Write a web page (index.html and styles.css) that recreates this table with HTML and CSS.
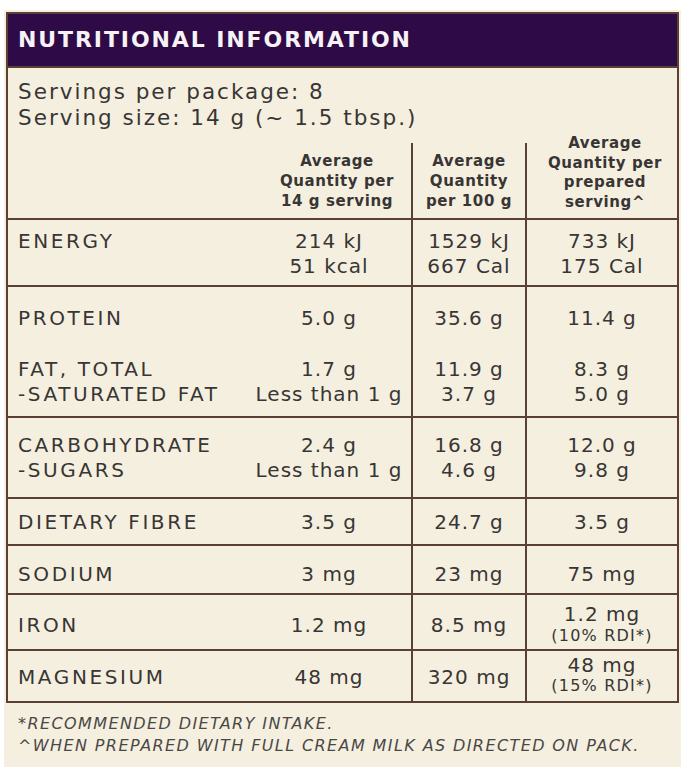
FILE: index.html
```html
<!DOCTYPE html>
<html lang="en">
<head>
<meta charset="utf-8">
<title>Nutritional Information</title>
<link rel="stylesheet" href="styles.css">
</head>
<body>
<div class="panel">
  <div class="label">
    <h1 class="title">NUTRITIONAL INFORMATION</h1>
    <div class="serving">
      <div>Servings per package: 8</div>
      <div>Serving size: 14 g (~ 1.5 tbsp.)</div>
    </div>
    <div class="row head">
      <div class="cell name"></div>
      <div class="cell c1"><div class="hd">Average<br>Quantity per<br>14 g serving</div></div>
      <div class="cell c2"><div class="hd">Average<br>Quantity<br>per 100 g</div></div>
      <div class="cell c3"><div class="hd hd4">Average<br>Quantity per<br>prepared<br>serving^</div></div>
    </div>
    <div class="row r-energy">
      <div class="cell name">ENERGY<br>&nbsp;</div>
      <div class="cell c1">214 kJ<br>51 kcal</div>
      <div class="cell c2">1529 kJ<br>667 Cal</div>
      <div class="cell c3">733 kJ<br>175 Cal</div>
    </div>
    <div class="row r-protein">
      <div class="cell name">PROTEIN</div>
      <div class="cell c1">5.0 g</div>
      <div class="cell c2">35.6 g</div>
      <div class="cell c3">11.4 g</div>
    </div>
    <div class="row r-fat nob">
      <div class="cell name">FAT, TOTAL<br>-SATURATED FAT</div>
      <div class="cell c1">1.7 g<br>Less than 1 g</div>
      <div class="cell c2">11.9 g<br>3.7 g</div>
      <div class="cell c3">8.3 g<br>5.0 g</div>
    </div>
    <div class="row r-carb">
      <div class="cell name">CARBOHYDRATE<br>-SUGARS</div>
      <div class="cell c1">2.4 g<br>Less than 1 g</div>
      <div class="cell c2">16.8 g<br>4.6 g</div>
      <div class="cell c3">12.0 g<br>9.8 g</div>
    </div>
    <div class="row r-fibre">
      <div class="cell name">DIETARY FIBRE</div>
      <div class="cell c1">3.5 g</div>
      <div class="cell c2">24.7 g</div>
      <div class="cell c3">3.5 g</div>
    </div>
    <div class="row r-sodium">
      <div class="cell name">SODIUM</div>
      <div class="cell c1">3 mg</div>
      <div class="cell c2">23 mg</div>
      <div class="cell c3">75 mg</div>
    </div>
    <div class="row r-iron">
      <div class="cell name">IRON</div>
      <div class="cell c1">1.2 mg</div>
      <div class="cell c2">8.5 mg</div>
      <div class="cell c3"><div class="main">1.2 mg</div><div class="rdi">(10% RDI*)</div></div>
    </div>
    <div class="row r-mag">
      <div class="cell name">MAGNESIUM</div>
      <div class="cell c1">48 mg</div>
      <div class="cell c2">320 mg</div>
      <div class="cell c3 tight"><div class="main">48 mg</div><div class="rdi">(15% RDI*)</div></div>
    </div>
  </div>
  <div class="notes">
    <div>*RECOMMENDED DIETARY INTAKE.</div>
    <div>^WHEN PREPARED WITH FULL CREAM MILK AS DIRECTED ON PACK.</div>
  </div>
</div>
</body>
</html>
```

FILE: styles.css
```css
* { box-sizing: border-box; }
html, body { margin: 0; padding: 0; background: #ffffff; }
body {
  font-family: "DejaVu Sans", "Liberation Sans", sans-serif;
  color: #383634;
}
.panel {
  margin: 10px 0 0 4px;
  width: 677px;
  background: #f5efe0;
  padding: 2px 2px 10px 2px;
}
.label {
  border: 2px solid #5a3f35;
}
.title {
  margin: 0;
  height: 54px;
  background: #2e0b47;
  border-bottom: 2px solid #5a3f35;
  color: #f7f2f6;
  font-size: 22px;
  font-weight: bold;
  letter-spacing: 1.9px;
  line-height: 52px;
  padding-left: 10px;
}
.serving {
  height: 75px;
  padding: 11px 0 0 10px;
  font-size: 21.5px;
  line-height: 25.6px;
  letter-spacing: 2px;
}
.row {
  display: grid;
  grid-template-columns: 239px 164px 114px 1fr;
  border-top: 2px solid #5a3f35;
  font-size: 20px;
  line-height: 25px;
}
.row.nob { border-top: none; }
.row.head { border-top: none; height: 75px; }
.cell {
  display: flex;
  flex-direction: column;
  justify-content: center;
  text-align: center;
  letter-spacing: 1px;
}
.cell.name {
  text-align: left;
  padding-left: 10px;
  letter-spacing: 2.6px;
}
.cell.c2, .cell.c3 { border-left: 2px solid #5a3f35; }
.head .cell {
  justify-content: flex-end;
  height: 75px;
  padding-bottom: 7px;
}
.hd {
  font-size: 15px;
  font-weight: bold;
  line-height: 20px;
  letter-spacing: 0.6px;
}
.hd4 { line-height: 19.5px; }
.head .c1 { padding-left: 16px; }
.head .c3 { padding-left: 6px; padding-bottom: 6px; }
.r-energy { height: 67px; }
.r-energy .cell { padding-top: 2px; }
.r-protein { height: 58px; }
.r-protein .cell { padding-top: 6px; }
.r-fat { height: 73px; }
.r-fat .cell { padding-top: 4px; }
.r-carb { height: 81px; }
.r-fibre { height: 47px; }
.r-fibre .cell { padding-top: 1px; }
.r-sodium { height: 49px; }
.r-sodium .cell { padding-top: 9px; }
.r-iron { height: 56px; }
.r-iron .cell { padding-top: 6px; }
.r-mag { height: 52px; }
.r-mag .cell { padding-top: 2px; }
.main { line-height: 21px; }
.rdi { font-size: 16px; line-height: 21px; letter-spacing: 1.2px; }
.tight { padding-bottom: 4px; }
.tight .main { line-height: 21px; }
.tight .rdi { line-height: 19px; }
.notes {
  padding: 10px 0 0 12px;
  font-size: 16px;
  line-height: 22px;
  font-style: italic;
  letter-spacing: 1.4px;
  color: #4a4846;
}
```
